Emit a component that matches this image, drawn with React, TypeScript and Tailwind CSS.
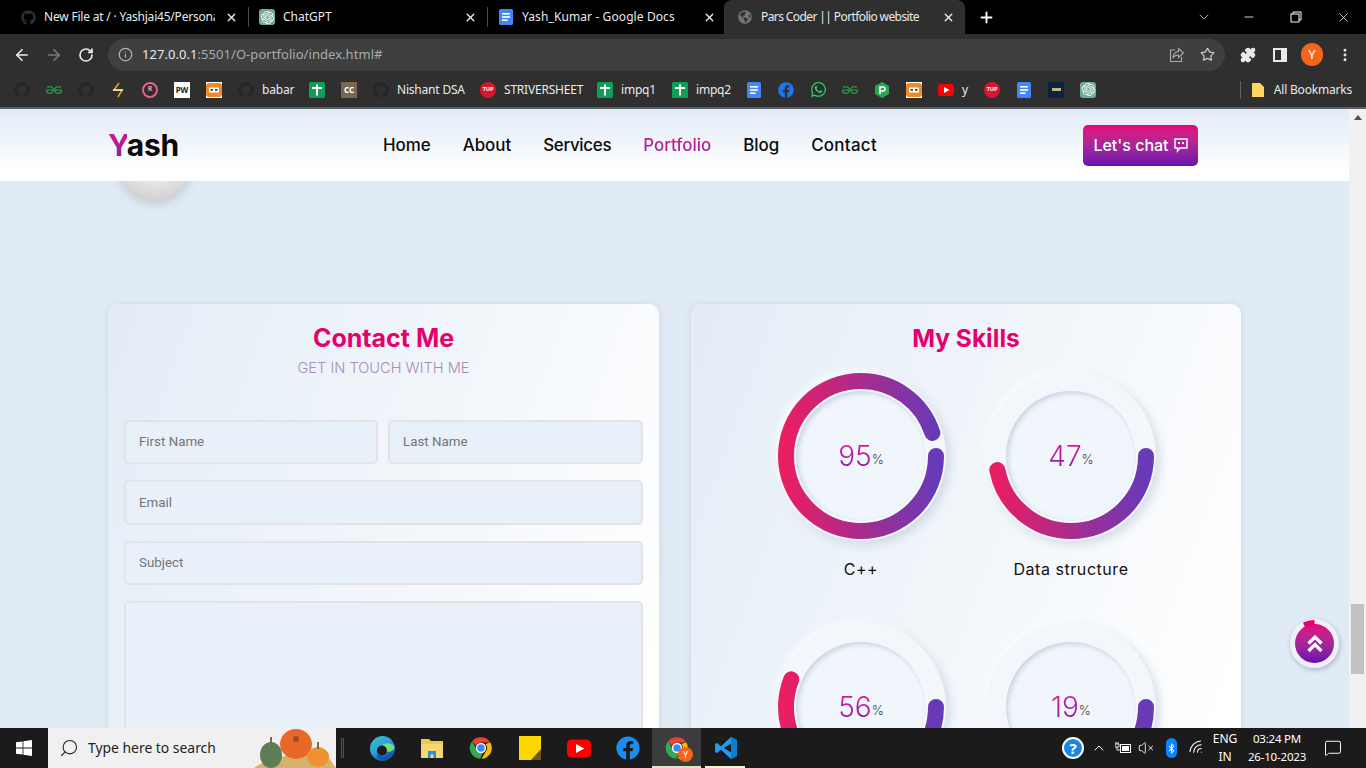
import React from "react";
import { ArrowLeft, ArrowRight, RotateCw, Info, Star, Puzzle, MoreVertical, X, Plus, ChevronDown, Minus, Search, ChevronUp, VolumeX, Wifi, MessageSquare } from "lucide-react";
import { FaGithub, FaFacebook, FaWhatsapp, FaBluetoothB, FaGlobeAmericas } from "react-icons/fa";
import { SiGeeksforgeeks, SiOpenai } from "react-icons/si";

const ui = "font-['Noto_Sans','Open_Sans',sans-serif]";
const pop = "font-['Inter',sans-serif]";

function Docs({ size = 16 }: { size?: number }) {
  return (
    <svg width={size} height={size} viewBox="0 0 16 16">
      <rect x="1" width="14" height="16" rx="1.5" fill="#4285f4" />
      <rect x="4" y="4" width="8" height="1.6" fill="#fff" />
      <rect x="4" y="7.2" width="8" height="1.6" fill="#fff" />
      <rect x="4" y="10.4" width="5.5" height="1.6" fill="#fff" />
    </svg>
  );
}
function Gpt({ size = 16 }: { size?: number }) {
  return (
    <span className="flex items-center justify-center rounded-[3px] bg-[#74aa9c] text-white" style={{ width: size, height: size }}>
      <SiOpenai size={size - 3} />
    </span>
  );
}
function Sheet() {
  return (
    <svg width="16" height="16" viewBox="0 0 16 16">
      <rect width="16" height="16" rx="1.5" fill="#0f9d58" />
      <rect x="3" y="5" width="10" height="2" fill="#fff" />
      <rect x="7" y="2.5" width="2" height="11" fill="#fff" />
    </svg>
  );
}
function Tup() {
  return (
    <span className="flex h-4 w-4 items-center justify-center rounded-full bg-[#d9152c] text-[5.5px] font-bold leading-none text-white">TUP</span>
  );
}
function Orange() {
  return (
    <svg width="16" height="16" viewBox="0 0 16 16">
      <rect width="16" height="16" fill="#fff" />
      <rect x="0" y="1" width="16" height="14" rx="3" fill="#f08a24" />
      <rect x="3" y="5.5" width="10" height="5" rx="1" fill="#fff" />
      <rect x="4.5" y="7" width="2.5" height="2" fill="#555" />
      <rect x="9" y="7" width="2.5" height="2" fill="#555" />
    </svg>
  );
}
function Yt({ w = 16, h = 12 }: { w?: number; h?: number }) {
  return (
    <svg width={w} height={h} viewBox="0 0 16 12">
      <rect width="16" height="12" rx="3" fill="#f00" />
      <polygon points="6,3 11.5,6 6,9" fill="#fff" />
    </svg>
  );
}
function GithubDark() {
  return <FaGithub size={16} className="text-[#22272b]" />;
}
function Geeks() {
  return <SiGeeksforgeeks size={16} className="text-[#2f8d46]" />;
}
function ChromeLogo({ size = 26 }: { size?: number }) {
  return (
    <svg width={size} height={size} viewBox="0 0 48 48">
      <path d="M24 4a20 20 0 0 1 17.3 10H24a10 10 0 0 0-9.2 6L7.7 11.6A20 20 0 0 1 24 4z" fill="#ea4335" />
      <path d="M41.3 14A20 20 0 0 1 25 44l8.6-15A10 10 0 0 0 32 16.5z" fill="#fbbc04" />
      <path d="M7.7 11.6 16.4 27a10 10 0 0 0 11 6.5L22.5 44A20 20 0 0 1 7.7 11.6z" fill="#34a853" />
      <circle cx="24" cy="24" r="8.2" fill="#4285f4" stroke="#fff" strokeWidth="2.6" />
    </svg>
  );
}

function BmIcon({ children }: { children: React.ReactNode }) {
  return <div className="flex h-4 w-[32px] shrink-0 items-center justify-center">{children}</div>;
}
function BmLabel({ icon, label, w }: { icon: React.ReactNode; label: string; w: string }) {
  return (
    <div className={`flex shrink-0 items-center ${w}`}>
      <div className="ml-2 mr-2 flex h-4 w-4 items-center justify-center">{icon}</div>
      <span className="text-[12px] leading-none tracking-[-0.2px] text-[#e8eaed]">{label}</span>
    </div>
  );
}

function Tab({ icon, title, active, width, iconMl, closeMr, titleClass }: { icon: React.ReactNode; title: string; active?: boolean; width: string; iconMl: string; closeMr: string; titleClass: string }) {
  return (
    <div className={`relative flex h-[34px] shrink-0 items-center ${width} ${active ? "rounded-t-[8px] bg-[#2f2f2f]" : ""}`}>
      <div className={`${iconMl} flex w-4 justify-center`}>{icon}</div>
      <span className={`ml-[8px] flex-1 overflow-hidden whitespace-nowrap text-[12px] text-[#e8eaed] ${titleClass}`}>{title}</span>
      <X size={13} strokeWidth={2.5} className={`ml-[10px] ${closeMr} shrink-0 text-[#e8eaed]`} />
    </div>
  );
}

function Skill({ value, label }: { value: number; label: string }) {
  const id = `g${value}`;
  return (
    <div className="flex h-[251px] flex-col items-center">
      <div className="relative flex h-[170px] w-[170px] items-center justify-center rounded-full bg-[#f3f7fc] shadow-[4px_4px_10px_rgba(170,185,205,0.45),-2px_-2px_6px_rgba(255,255,255,0.9)]">
        <div className="flex h-[130px] w-[130px] items-center justify-center rounded-full bg-[#f1f6fc] shadow-[inset_2px_2px_5px_rgba(180,198,218,0.75),1px_1px_2px_rgba(255,255,255,0.9)]">
          <span className={`${pop} bg-linear-to-b from-[#f0008a] to-[#7a00b0] bg-clip-text text-[28px] font-light leading-[34px] text-transparent`}>{value}</span>
          <span className={`${pop} mt-[7px] text-[13px] font-light text-[#444]`}>%</span>
        </div>
        <svg className="absolute inset-0" width="170" height="170" viewBox="0 0 170 170">
          <defs>
            <linearGradient id={id} x1="0" y1="0" x2="1" y2="0">
              <stop offset="0" stopColor="#e91e63" />
              <stop offset="1" stopColor="#673ab7" />
            </linearGradient>
          </defs>
          <circle cx="85" cy="85" r="75" fill="none" stroke={`url(#${id})`} strokeWidth="16" strokeLinecap="round" pathLength={100} strokeDasharray={`${value} 100`} />
        </svg>
      </div>
      <div className={`${pop} mt-[16px] text-[16px] leading-[24px] tracking-[0.55px] text-[#111]`}>{label}</div>
    </div>
  );
}

const field = "flex items-center rounded-[5px] border-2 border-[#e5e2e6] bg-[#e8f0fa] px-[13px] font-['Roboto',sans-serif] text-[13.33px] text-[#757575]";
const card = "h-[640px] shrink-0 rounded-[10px] bg-[linear-gradient(110deg,#e3ecf6,#ffffff_88%)] shadow-[0_0_6px_rgba(190,205,225,0.7)]";

export default function App() {
  return (
    <div className="flex h-screen w-full flex-col overflow-hidden bg-[#e1ebf6]">
      {/* Browser chrome */}
      <div className={`${ui} shrink-0`}>
        <div className="flex h-[34px] items-center bg-black pl-[7px]">
          <Tab width="w-[241px]" iconMl="ml-[13px]" closeMr="mr-[10px]" titleClass="tracking-[-0.2px]" icon={<FaGithub size={15} className="text-[#2b3036]" />} title="New File at / · Yashjai45/Persona" />
          <div className="h-5 w-px bg-[#4a4a4a]" />
          <Tab width="w-[238px]" iconMl="ml-[10px]" closeMr="mr-[10px]" titleClass="" icon={<Gpt />} title="ChatGPT" />
          <div className="h-5 w-px bg-[#4a4a4a]" />
          <Tab width="w-[236px]" iconMl="ml-[10px]" closeMr="mr-[8px]" titleClass="tracking-[0.1px]" icon={<Docs />} title="Yash_Kumar - Google Docs" />
          <Tab active width="w-[241px]" iconMl="ml-[13px]" closeMr="mr-[10px]" titleClass="tracking-[-0.6px]" icon={<FaGlobeAmericas size={14} className="text-[#70757a]" />} title="Pars Coder || Portfolio website" />
          <Plus size={17} strokeWidth={2.6} className="ml-[13px] text-white" />
          <div className="flex-1" />
          <ChevronDown size={16} strokeWidth={1.2} className="mr-[30px] text-[#d0d0d0]" />
          <Minus size={14} strokeWidth={1.4} className="mr-[34px] text-white" />
          <svg width="12" height="12" viewBox="0 0 12 12" className="mr-[34px]" fill="none" stroke="#fff">
            <rect x="1" y="3" width="8" height="8" />
            <path d="M3 3V1h8v8H9" />
          </svg>
          <X size={15} strokeWidth={1.2} className="mr-[15px] text-white" />
        </div>
        <div className="flex h-[38px] items-center bg-[#2f2f2f] pt-[3px]">
          <ArrowLeft size={18} strokeWidth={2.2} className="ml-[13px] text-[#e8eaed]" />
          <ArrowRight size={18} strokeWidth={2.2} className="ml-[14px] text-[#7b7b7b]" />
          <RotateCw size={16} strokeWidth={2.5} className="ml-[15px] text-[#e8eaed]" />
          <div className="ml-[14px] flex h-[32px] w-[1117px] items-center rounded-full bg-[#3f3f3f]">
            <Info size={15} className="ml-[10px] text-[#b5b5b5]" />
            <span className="ml-[9px] text-[13px] tracking-[0.05px] text-[#e8eaed]">127.0.0.1<span className="text-[#a8abb0]">:5501/O-portfolio/index.html#</span></span>
            <div className="flex-1" />
            <svg width="16" height="16" viewBox="0 0 16 16" fill="none" stroke="#a8abb0" strokeWidth="1.1" className="mr-[15px]">
              <path d="M6 3H1.5v11.5h11V10" />
              <path d="M9.5 1.5 14.5 6l-5 4.5V8C7 8 5 9 3.8 11 4 7.5 6.5 5 9.5 4.5z" />
            </svg>
            <Star size={15} className="mr-[10px] text-[#c8c8c8]" />
          </div>
          <Puzzle size={16} fill="#e8eaed" className="ml-[15px] text-[#e8eaed]" />
          <svg width="14" height="14" viewBox="0 0 14 14" className="ml-[17px]">
            <rect x="1" y="1" width="12" height="12" fill="none" stroke="#e8eaed" strokeWidth="2" />
            <rect x="8" y="1" width="5" height="12" fill="#e8eaed" />
          </svg>
          <div className="ml-[14px] flex h-[23px] w-[22px] items-center justify-center rounded-full bg-[#f4661b] text-[13px] text-white">Y</div>
          <MoreVertical size={16} strokeWidth={2.4} className="ml-[14px] text-[#e8eaed]" />
        </div>
        <div className="flex h-[35px] items-center bg-[#2f2f2f] pl-[6px]">
          <BmIcon><GithubDark /></BmIcon>
          <BmIcon><Geeks /></BmIcon>
          <BmIcon><GithubDark /></BmIcon>
          <BmIcon>
            <svg width="16" height="16" viewBox="0 0 16 16">
              <path d="M9 1 4 8h8L8 15" fill="none" stroke="#f39c12" strokeWidth="1.6" />
              <rect x="3" y="7.3" width="10" height="1.5" fill="#eee" />
            </svg>
          </BmIcon>
          <BmIcon>
            <span className="flex h-4 w-4 items-center justify-center rounded-full border-2 border-[#e0648a] bg-[#3a2630] text-[7px] font-bold text-[#f0a0b8]">R</span>
          </BmIcon>
          <BmIcon>
            <span className="flex h-4 w-4 items-center justify-center bg-white text-[8px] font-bold leading-none text-[#222]">PW</span>
          </BmIcon>
          <BmIcon><Orange /></BmIcon>
          <BmLabel w="w-[71px]" icon={<GithubDark />} label="babar" />
          <BmIcon><Sheet /></BmIcon>
          <BmIcon>
            <span className="flex h-4 w-4 items-center justify-center bg-[#7b6650] text-[8px] font-bold leading-none text-white">CC</span>
          </BmIcon>
          <BmLabel w="w-[107px]" icon={<GithubDark />} label="Nishant DSA" />
          <BmLabel w="w-[117px]" icon={<Tup />} label="STRIVERSHEET" />
          <BmLabel w="w-[75px]" icon={<Sheet />} label="impq1" />
          <BmLabel w="w-[74px]" icon={<Sheet />} label="impq2" />
          <BmIcon><Docs /></BmIcon>
          <BmIcon><FaFacebook size={16} className="text-[#1877f2]" /></BmIcon>
          <BmIcon><FaWhatsapp size={17} className="text-[#25d366]" /></BmIcon>
          <BmIcon><Geeks /></BmIcon>
          <BmIcon>
            <svg width="16" height="16" viewBox="0 0 16 16">
              <polygon points="8,0 15,4 15,12 8,16 1,12 1,4" fill="#2ea44f" />
              <path d="M6 12V5h3a2 2 0 0 1 0 4H6" fill="none" stroke="#fff" strokeWidth="1.6" />
            </svg>
          </BmIcon>
          <BmIcon><Orange /></BmIcon>
          <BmLabel w="w-[46px]" icon={<Yt />} label="y" />
          <BmIcon><Tup /></BmIcon>
          <BmIcon><Docs /></BmIcon>
          <BmIcon><span className="flex h-4 w-4 items-center justify-center bg-[#0b2240]"><span className="h-[3px] w-[9px] bg-[#c7b27a]" /></span></BmIcon>
          <BmIcon><Gpt /></BmIcon>
          <div className="flex-1" />
          <div className="mr-[10px] h-[18px] w-px bg-[#5f6368]" />
          <svg width="14" height="16" viewBox="0 0 14 16" className="mr-[9px]">
            <path d="M1 1h8l4 4v10H1z" fill="#fdd663" />
          </svg>
          <span className="mr-[14px] text-[12px] leading-none tracking-[-0.2px] text-[#e8eaed]">All Bookmarks</span>
        </div>
        <div className="h-[2px] bg-[#5a6068]" />
      </div>

      {/* Page */}
      <div className="flex min-h-0 flex-1">
        <div className="relative min-w-0 flex-1 overflow-hidden bg-[#e1ebf6]">
          <header className="relative z-10 flex h-[72px] items-center bg-linear-to-b from-[#e1ebf6] to-white to-[88%] pl-[108px]">
            <div className={`${pop} w-[275px] text-[30px] font-bold leading-none tracking-[-0.2px] text-[#0a0a0a]`}>
              <span className="bg-linear-to-b from-[#e6007a] to-[#7a0bb0] bg-clip-text text-transparent">Y</span>ash
            </div>
            <nav className={`${pop} flex w-[700px] gap-[32px] pt-[2px] text-[16.9px] font-medium text-[#0a0a0a]`}>
              <span>Home</span>
              <span>About</span>
              <span className="tracking-[-0.3px]">Services</span>
              <span className="bg-linear-to-b from-[#e6007a] to-[#7a0bb0] bg-clip-text text-transparent">Portfolio</span>
              <span>Blog</span>
              <span className="tracking-[0.3px]">Contact</span>
            </nav>
            <button className={`${pop} flex h-[41px] w-[115px] items-center justify-center gap-[5px] rounded-[5px] bg-linear-to-b from-[#e8007a] to-[#6a0bb0] text-[16px] font-medium text-white`}>
              Let's chat
              <svg width="14" height="15" viewBox="0 0 14 15">
                <path d="M1 1h12v9H6l-2.5 3v-3H1z" fill="none" stroke="#fff" strokeWidth="1.4" />
                <rect x="4" y="4" width="2" height="2" fill="#fff" />
                <rect x="8" y="4" width="2" height="2" fill="#fff" />
              </svg>
            </button>
          </header>

          <div className="pl-[108px]">
            <div className="ml-[10px] mt-[-53px] h-[74px] w-[74px] rounded-full bg-[radial-gradient(circle_at_50%_30%,#ececec_40%,#d2d2d2_78%,#c4c6ca_100%)] shadow-[0_2px_8px_rgba(160,170,180,0.5)]" />
            <div className="mt-[102px] flex w-[1133px] gap-[32px]">
              <section className={`${card} w-[551px] px-[16px]`}>
                <h2 className={`${pop} mt-[17px] text-center text-[25px] font-bold leading-[34px] text-[#e6006e]`}>Contact Me</h2>
                <p className={`${pop} mt-[1px] text-center text-[14.6px] font-light leading-[24px] text-[#a98db5]`}>GET IN TOUCH WITH ME</p>
                <div className="mt-[40px] flex gap-[10px]">
                  <div className={`${field} h-[44px] w-[254px]`}>First Name</div>
                  <div className={`${field} h-[44px] w-[255px]`}>Last Name</div>
                </div>
                <div className={`${field} mt-[16px] h-[45px]`}>Email</div>
                <div className={`${field} mt-[16px] h-[44px]`}>Subject</div>
                <div className={`${field} mt-[16px] h-[160px]`} />
              </section>
              <section className={`${card} w-[550px]`}>
                <h2 className={`${pop} mt-[17px] text-center text-[24.5px] font-bold leading-[34px] text-[#e6006e]`}>My Skills</h2>
                <div className="mx-auto mt-[16px] grid w-[420px] grid-cols-2">
                  <Skill value={95} label="C++" />
                  <Skill value={47} label="Data structure" />
                  <Skill value={56} label="HTML" />
                  <Skill value={19} label="CSS" />
                </div>
              </section>
            </div>
          </div>

          {/* Scroll to top */}
          <div className="absolute left-[1290px] top-[510px] z-20 flex h-[49px] w-[49px] items-center justify-center rounded-full bg-[#eef2f7] shadow-[1px_2px_5px_rgba(140,150,170,0.6)]">
            <svg className="absolute inset-0" width="49" height="49" viewBox="0 0 49 49">
              <path d="M13 3.5 A24 24 0 0 1 24.5 1 L24.5 6 A19 19 0 0 0 15 8.5 Z" fill="#e6007a" />
            </svg>
            <div className="flex h-[39px] w-[39px] items-center justify-center rounded-full bg-linear-to-b from-[#e6007a] to-[#6a0bb0]">
              <svg width="18" height="20" viewBox="0 0 18 20" fill="none" stroke="#fff" strokeWidth="3.2">
                <path d="M2.5 9.5 9 3l6.5 6.5" />
                <path d="M2.5 17 9 10.5l6.5 6.5" />
              </svg>
            </div>
          </div>
        </div>

        {/* Scrollbar */}
        <div className="flex w-[17px] shrink-0 flex-col items-center bg-[#f1f1f1] pt-[6px]">
          <div className="h-0 w-0 border-x-[4px] border-b-[5px] border-x-transparent border-b-[#505050]" />
          <div className="mt-[484px] h-[70px] w-[13px] bg-[#c1c1c1]" />
        </div>
      </div>

      {/* Taskbar */}
      <div className={`${ui} flex h-[40px] shrink-0 items-center bg-[#1b1b1b]`}>
        <div className="flex h-full w-[48px] items-center justify-center">
          <svg width="16" height="16" viewBox="0 0 16 16" fill="#fff">
            <path d="M0 2.3 6.6 1.4v6.2H0zM7.4 1.3 16 0v7.6H7.4zM0 8.4h6.6v6.2L0 13.7zM7.4 8.4H16V16l-8.6-1.3z" />
          </svg>
        </div>
        <div className="relative flex h-full w-[288px] items-center overflow-hidden bg-[#f0f0f0]">
          <Search size={20} strokeWidth={1.3} className="ml-[11px] -scale-x-100 text-[#222]" />
          <span className="ml-[9px] pt-[1px] text-[13.9px] text-[#222]">Type here to search</span>
          <svg className="absolute right-0 top-0" width="90" height="40" viewBox="0 0 90 40">
            <path d="M8 40 Q30 24 80 26 L90 40z" fill="#d6b36c" />
            <ellipse cx="25" cy="27" rx="11" ry="13" fill="#5f7d55" />
            <ellipse cx="50" cy="16" rx="16" ry="15" fill="#e8682a" />
            <ellipse cx="72" cy="29" rx="11" ry="10" fill="#ee9130" />
            <rect x="24" y="9" width="2" height="7" fill="#7a6a4a" />
            <rect x="71" y="14" width="2" height="7" fill="#7a6a4a" />
            <circle cx="50" cy="11" r="3" fill="#a34d1c" />
          </svg>
        </div>
        <div className="ml-[5px] h-[20px] w-[3px] border-x border-[#555]" />
        <div className="ml-[14px] flex h-full items-center">
          <div className="flex h-full w-[49px] items-center justify-center">
            <svg width="25" height="25" viewBox="0 0 24 24">
              <defs>
                <linearGradient id="edge" x1="0" y1="0" x2="0.7" y2="1">
                  <stop offset="0" stopColor="#33c6c0" />
                  <stop offset="0.5" stopColor="#2f9fe0" />
                  <stop offset="1" stopColor="#0c4f98" />
                </linearGradient>
              </defs>
              <circle cx="12" cy="12" r="12" fill="url(#edge)" />
              <ellipse cx="17" cy="11" rx="6.5" ry="4" fill="#6ee07d" />
              <circle cx="11.5" cy="14" r="4.8" fill="#1b1b1b" />
              <path d="M7 17c2 3 8 4 14 1-3 5-10 6-14 3z" fill="#0c58a8" />
            </svg>
          </div>
          <div className="flex h-full w-[49px] items-center justify-center">
            <svg width="22" height="22" viewBox="0 0 22 22">
              <path d="M0 2h8l2 2h12v17H0z" fill="#f3c64c" />
              <rect x="0" y="7" width="22" height="14" fill="#f7d774" />
              <path d="M7 14h8v7h-2.5v-3.5h-3V21H7z" fill="#2c8fdc" />
            </svg>
          </div>
          <div className="flex h-full w-[49px] items-center justify-center"><ChromeLogo /></div>
          <div className="flex h-full w-[49px] items-center justify-center">
            <svg width="22" height="24" viewBox="0 0 22 24">
              <path d="M0 0h22v16l-8 8H0z" fill="#fdd800" />
              <path d="M22 13v11H12z" fill="#6b5a14" />
            </svg>
          </div>
          <div className="flex h-full w-[49px] items-center justify-center"><Yt w={24} h={19} /></div>
          <div className="flex h-full w-[49px] items-center justify-center"><FaFacebook size={24} className="text-[#1d8cf0]" /></div>
          <div className="relative flex h-full w-[49px] items-center justify-center bg-[#3c3c3c]">
            <ChromeLogo />
            <span className="absolute left-[26px] top-[19px] flex h-[15px] w-[15px] items-center justify-center rounded-full bg-[#f4661b] text-[9px] text-white">Y</span>
            <div className="absolute bottom-0 left-0 h-[2px] w-full bg-[#dbe8c4]" />
          </div>
          <div className="relative flex h-full w-[49px] items-center justify-center">
            <svg width="24" height="24" viewBox="0 0 24 24">
              <path d="M17 1 23 4v16l-6 3L7 13.8 3 17l-2-1V8l2-1 4 3.2z" fill="#1f9cf0" />
              <path d="M17 7.5 10 12l7 4.5z" fill="#1b1b1b" />
              <path d="M17 1l6 3v16l-6 3z" fill="#0b7fd0" />
            </svg>
            <div className="absolute bottom-0 left-[4px] h-[2px] w-[40px] bg-[#eef5cf]" />
          </div>
        </div>
        <div className="flex-1" />
        <div className="flex h-full items-center text-white">
          <span className="flex h-[22px] w-[22px] items-center justify-center rounded-full border-2 border-white bg-[#1b87e0] text-[15px] font-bold leading-none">?</span>
          <ChevronUp size={16} strokeWidth={1.5} className="ml-[7px]" />
          <svg width="17" height="12" viewBox="0 0 17 12" className="ml-[8px]" fill="none" stroke="#fff">
            <rect x="5.5" y="2.5" width="10" height="8" />
            <rect x="7" y="4" width="7" height="5" fill="#fff" stroke="none" />
            <path d="M0 2h4v3H0zM2 5v3h3M1 0v2M3 0v2" strokeWidth="0.9" />
          </svg>
          <VolumeX size={16} strokeWidth={1.3} className="ml-[6px]" />
          <span className="ml-[12px] flex h-[20px] w-[11px] items-center justify-center rounded-full bg-[#0a84ff]"><FaBluetoothB size={11} /></span>
          <Wifi size={18} strokeWidth={1.4} className="ml-[11px] -rotate-45" />
          <div className="ml-[2px] flex w-[34px] flex-col items-center text-[12px] leading-[18px]">
            <span>ENG</span>
            <span>IN</span>
          </div>
          <div className="ml-[2px] flex w-[66px] flex-col items-center text-[11.5px] leading-[18px] tracking-[-0.2px]">
            <span>03:24 PM</span>
            <span>26-10-2023</span>
          </div>
          <MessageSquare size={18} strokeWidth={1.3} className="ml-[14px] mr-[24px]" />
        </div>
      </div>
    </div>
  );
}
